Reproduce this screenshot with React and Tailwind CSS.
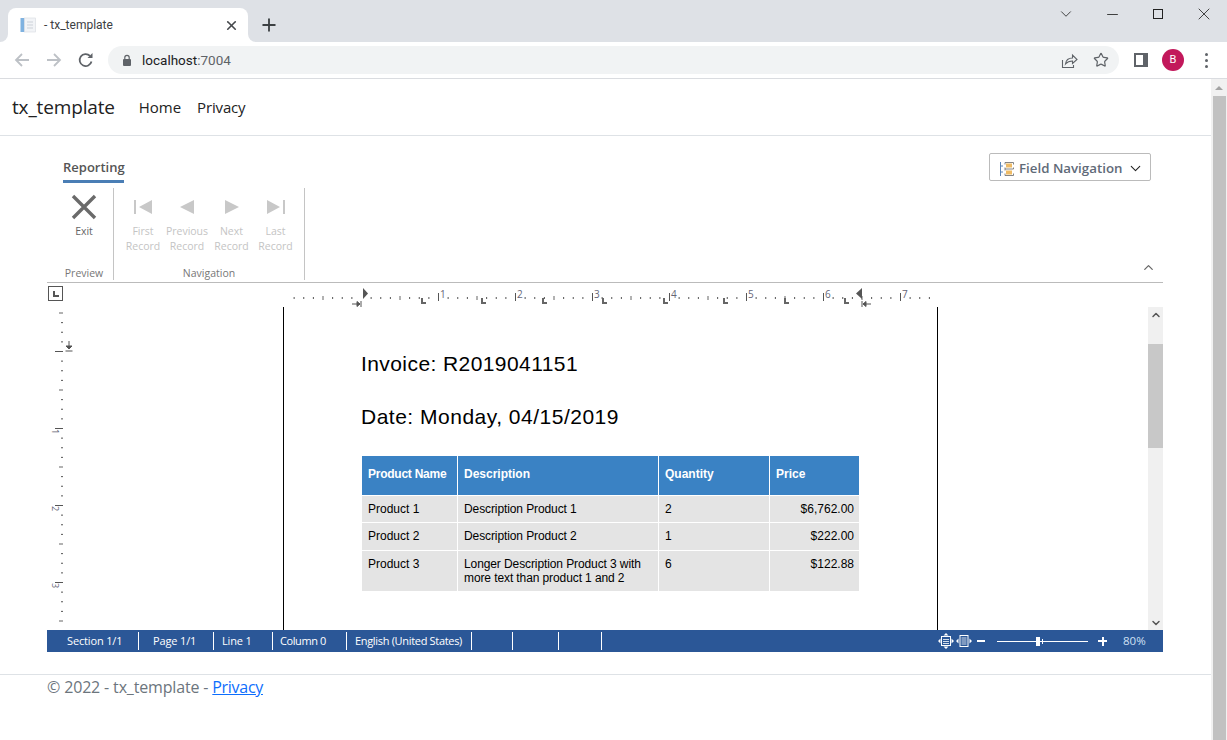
import React from 'react';
import { ChevronDown, ChevronUp, Minus, X, Star, Plus } from 'lucide-react';

const ui = { fontFamily: '"Open Sans", "Noto Sans", sans-serif' };

const INCH = 77;
const ZERO_X = 297; // inch 0 in top ruler svg coords (starts at page x=64)

function Favicon() {
    return (
        <svg width="16" height="16" viewBox="0 0 16 16">
            <rect x="0.5" y="1" width="4" height="14" fill="#7fb2e0" />
            <rect x="4.5" y="1" width="11" height="14" fill="#f2f4f7" stroke="#d5d9df" strokeWidth="0.6" />
            <path d="M7 5h6M7 8h6M7 11h6" stroke="#ccd1d8" strokeWidth="1" />
        </svg>
    );
}

function ChromeBar() {
    return (
        <div className="shrink-0" style={ui}>
            <div className="h-[42px] bg-[#dee1e6] flex items-end pl-2 relative">
                <div className="w-[240px] h-[34px] bg-white rounded-t-lg flex items-center pl-[12px] pr-[9px] relative">
                    <div className="absolute left-[-8px] bottom-0 w-[8px] h-[8px] bg-white">
                        <div className="w-full h-full bg-[#dee1e6] rounded-br-lg" />
                    </div>
                    <div className="absolute right-[-8px] bottom-0 w-[8px] h-[8px] bg-white">
                        <div className="w-full h-full bg-[#dee1e6] rounded-bl-lg" />
                    </div>
                    <Favicon />
                    <span className="ml-[8px] text-[12px] text-[#3c4043] flex-1" style={{ fontFamily: 'Roboto, sans-serif' }}>- tx_template</span>
                    <X size={15} strokeWidth={2.6} className="text-[#45484c]" />
                </div>
                <Plus size={20} strokeWidth={2.2} className="ml-[11px] mb-[7px] text-[#3c4043]" />
                <div className="ml-auto flex items-start h-full self-start text-[#222]">
                    <div className="w-[46px] h-[28px] flex items-center justify-center"><ChevronDown size={18} strokeWidth={1.1} /></div>
                    <div className="w-[46px] h-[28px] flex items-center justify-center"><Minus size={17} strokeWidth={1.2} /></div>
                    <div className="w-[46px] h-[28px] flex items-center justify-center"><div className="w-[10px] h-[10px] border border-[#222]" /></div>
                    <div className="w-[46px] h-[28px] flex items-center justify-center"><X size={20} strokeWidth={1} /></div>
                </div>
            </div>
            <div className="h-[37px] bg-white border-b border-[#dadce0] flex items-center pl-[13px]">
                <svg width="18" height="18" viewBox="0 0 18 18" fill="none" stroke="#bdc1c6" strokeWidth="1.8"><path d="M16 9H3M9 3 3 9l6 6" /></svg>
                <svg width="18" height="18" viewBox="0 0 18 18" fill="none" stroke="#bdc1c6" strokeWidth="1.8" className="ml-[14px]"><path d="M2 9h13M9 3l6 6-6 6" /></svg>
                <svg width="18" height="18" viewBox="0 0 18 18" fill="none" className="ml-[14px]">
                    <path d="M14.5 10.5a6 6 0 1 1-1.5-5.6" stroke="#5f6368" strokeWidth="1.8" />
                    <path d="M15.5 2v5h-5z" fill="#5f6368" />
                </svg>
                <div className="ml-[13px] w-[1011px] h-[28px] bg-[#f1f3f4] rounded-full flex items-center pl-[13px] pr-[10px]">
                    <svg width="12" height="13" viewBox="0 0 12 13" fill="#5f6368">
                        <rect x="2" y="5" width="8" height="7" rx="1" />
                        <path d="M3.8 5V3.6a2.2 2.2 0 0 1 4.4 0V5" fill="none" stroke="#5f6368" strokeWidth="1.2" />
                    </svg>
                    <span className="ml-[9px] text-[13.5px] text-[#202124]" style={{ fontFamily: 'Roboto, sans-serif' }}>localhost<span className="text-[#5f6368]">:7004</span></span>
                    <svg width="17" height="17" viewBox="0 0 17 17" fill="none" stroke="#5f6368" strokeWidth="1.1" className="ml-auto">
                        <path d="M1.5 8v7.5h11V13" />
                        <path d="M4.5 12c.5-4 3-6 7-6V3l4.5 4.5L11.5 11.5V9c-3 0-5 .7-7 3z" />
                    </svg>
                    <Star size={16} strokeWidth={1.8} className="ml-[15px] text-[#5f6368]" />
                </div>
                <div className="ml-[15px] w-[14px] h-[14px] bg-white border-2 border-r-[5px] border-[#5f6368]" />
                <div className="ml-[14px] w-[22px] h-[22px] rounded-full bg-[#c2185b] text-white text-[11px] flex items-center justify-center" style={{ fontFamily: 'Roboto, sans-serif' }}>B</div>
                <div className="ml-[21px] flex flex-col gap-[3px]">
                    <div className="w-[3px] h-[3px] rounded-full bg-[#5f6368]" />
                    <div className="w-[3px] h-[3px] rounded-full bg-[#5f6368]" />
                    <div className="w-[3px] h-[3px] rounded-full bg-[#5f6368]" />
                </div>
            </div>
        </div>
    );
}

function NavIcon({ type }) {
    const fill = '#c8c8c8';
    return (
        <svg width="20" height="16" viewBox="0 0 20 16">
            {type === 'first' && <path d="M1 1h2v14H1zM19 1v14L6 8z" fill={fill} />}
            {type === 'prev' && <path d="M17 1v14L3 8z" fill={fill} />}
            {type === 'next' && <path d="M3 1v14l14-7z" fill={fill} />}
            {type === 'last' && <path d="M17 1h2v14h-2zM1 1v14l13-7z" fill={fill} />}
        </svg>
    );
}

function RibbonBtn({ type, a, b, w }) {
    return (
        <div className={`flex flex-col items-center ${w}`}>
            <div className="h-[16px] flex items-center mt-[11px]"><NavIcon type={type} /></div>
            <div className="mt-[9px] text-[10.5px] leading-[15px] text-[#c4c4c4] text-center">{a}<br />{b}</div>
        </div>
    );
}

function Ribbon() {
    return (
        <div className="h-[147px] border-b border-[#bbb] relative shrink-0" style={ui}>
            <div className="pl-4 pt-[17px]">
                <div className="w-[61px] text-[13px] font-semibold text-[#555] text-center border-b-[3px] border-[#4a7eb5] h-[30px] leading-[29px]">Reporting</div>
            </div>
            <div className="flex h-[92px] mt-[5px]">
                <div className="w-[67px] pl-[8px] border-r border-[#c4c4c4] flex flex-col items-center">
                    <svg width="26" height="26" viewBox="0 0 26 26" className="mt-[6px]"><path d="M2 2 24 24M24 2 2 24" stroke="#6a6a6a" strokeWidth="3.4" /></svg>
                    <div className="mt-[4px] text-[10.5px] leading-[15px] text-[#666]">Exit</div>
                    <div className="mt-auto pt-[2px] text-[10.5px] leading-[15px] text-[#777] translate-y-[1px]">Preview</div>
                </div>
                <div className="w-[191px] border-r border-[#c4c4c4] flex flex-col items-center">
                    <div className="flex pl-[7px] w-full">
                        <RibbonBtn type="first" a="First" b="Record" w="w-[44px]" />
                        <RibbonBtn type="prev" a="Previous" b="Record" w="w-[44px]" />
                        <RibbonBtn type="next" a="Next" b="Record" w="w-[45px]" />
                        <RibbonBtn type="last" a="Last" b="Record" w="w-[43px]" />
                    </div>
                    <div className="mt-auto text-[10.5px] leading-[15px] text-[#777] translate-y-[1px]">Navigation</div>
                </div>
            </div>
            <div className="absolute right-[12px] top-[17px] w-[162px] h-[28px] border border-[#bbb] rounded-[2px] flex items-center pl-[9px] pt-[3px] bg-white">
                <svg width="16" height="16" viewBox="0 0 16 16" fill="none">
                    <path d="M1.5 1v14M1.5 5H4M1.5 11H4" stroke="#5b85b8" />
                    <path d="M6 3.5V1.5h8.500v2M6 6.5v1.500h8.500V6.500M6 9.500V8M6 12.500v2h8.500v-2" stroke="#666" strokeWidth="0.8" />
                    <rect x="7" y="2.500" width="6" height="4" fill="#eebb66" />
                    <rect x="7" y="9.500" width="6" height="4" fill="#eebb66" />
                </svg>
                <span className="ml-[4px] text-[13.3px] font-semibold text-[#5f6a78]">Field Navigation</span>
                <ChevronDown size={17} strokeWidth={1.5} className="ml-[5px] text-[#222]" />
            </div>
            <ChevronUp size={15} strokeWidth={2} className="absolute right-[7px] bottom-[7px] text-[#666]" />
        </div>
    );
}

function TopRuler() {
    const ticks = [];
    for (let i = -7; i <= 59; i++) {
        const x = ZERO_X + (i * INCH) / 8;
        if (i % 8 === 0) {
            if (i > 0) ticks.push(<rect key={i} x={x} y="10" width="1" height="8" fill="#555" />);
        } else if (i % 4 === 0) {
            ticks.push(<rect key={i} x={x} y="13" width="1" height="4" fill="#666" />);
        } else {
            ticks.push(<rect key={i} x={x} y="14" width="1" height="2" fill="#555" />);
        }
    }
    const tabs = [];
    for (let i = 1; i <= 8; i++) {
        const x = Math.round(ZERO_X + i * 60.5) - 1;
        tabs.push(<path key={i} d={`M${x} 15h2v4h3v2h-5z`} fill="#666" />);
    }
    return (
        <svg width="1099" height="24" className="block">
            {ticks}
            {tabs}
            {[1, 2, 3, 4, 5, 6, 7].map(n => (
                <text key={n} x={ZERO_X + n * INCH + 2} y="15" fontSize="10" fill="#667" fontFamily="Open Sans, sans-serif">{n}</text>
            ))}
            <path d="M299 5v11l5-5.500z" fill="#555" />
            <path d="M288 21h8M293 18.500l3 2.500-3 2.500zM297 18v6" fill="#555" stroke="#555" strokeWidth="1" />
            <path d="M798 5v11l-6-5.500z" fill="#555" />
            <path d="M807 21h-8M802 18.500l-3 2.500 3 2.500zM798 18v6" fill="#555" stroke="#555" strokeWidth="1" />
        </svg>
    );
}

function SideRuler() {
    const ticks = [];
    for (let i = -4; i <= 28; i++) {
        const y = 44 + (i * INCH) / 8;
        if (i % 8 === 0) ticks.push(<rect key={i} x="8" y={y} width="8" height="1" fill="#555" />);
        else if (i % 4 === 0) ticks.push(<rect key={i} x="12" y={y} width="4" height="1" fill="#666" />);
        else ticks.push(<rect key={i} x="14" y={y} width="2" height="1" fill="#555" />);
    }
    return (
        <svg width="36" height="323" className="block shrink-0">
            {ticks}
            {[1, 2, 3].map(n => (
                <text key={n} x="0" y="0" fontSize="9" fill="#667" fontFamily="Open Sans, sans-serif" transform={`translate(5 ${44 + n * INCH + 1}) rotate(90)`}>{n}</text>
            ))}
            <path d="M22 34v8M19 39l3 3 3-3zM18.500 44h7" stroke="#555" fill="#555" strokeWidth="1" />
        </svg>
    );
}

const rows = [
    ['Product 1', 'Description Product 1', '2', '$6,762.00', 'h-[27px]'],
    ['Product 2', 'Description Product 2', '1', '$222.00', 'h-[28px]'],
    ['Product 3', <>Longer Description Product 3 with<br />more text than product 1 and 2</>, '6', '$122.88', 'h-[41px]'],
];

function InvoiceTable() {
    return (
        <table className="mt-[27px] ml-[1px] w-[497px] table-fixed border-collapse text-[12px]">
            <colgroup>
                <col className="w-[95.5px]" />
                <col className="w-[201px]" />
                <col className="w-[111px]" />
                <col className="w-[89.5px]" />
            </colgroup>
            <thead>
                <tr className="h-[39px] bg-[#3a82c4] text-white font-bold text-left">
                    <th className="border-r border-white pl-[6px] pb-[2px] tracking-[-0.25px]">Product Name</th>
                    <th className="border-r border-white pl-[6px] pb-[2px]">Description</th>
                    <th className="border-r border-white pl-[6px] pb-[2px]">Quantity</th>
                    <th className="pl-[6px] pb-[2px]">Price</th>
                </tr>
            </thead>
            <tbody>
                {rows.map(r => (
                    <tr key={r[0]} className={`${r[4]} bg-[#e4e4e4] text-black border-t border-white align-top`}>
                        <td className="border-r border-white pl-[6px] pt-[6px] leading-[14px]">{r[0]}</td>
                        <td className="border-r border-white pl-[6px] pt-[6px] leading-[14px] tracking-[-0.1px]">{r[1]}</td>
                        <td className="border-r border-white pl-[6px] pt-[6px] leading-[14px]">{r[2]}</td>
                        <td className="pr-[5px] pt-[6px] leading-[14px] text-right">{r[3]}</td>
                    </tr>
                ))}
            </tbody>
        </table>
    );
}

function StatusBar() {
    const cells = [
        ['w-[92px] pl-[20px] tracking-[-0.15px]', 'Section 1/1'],
        ['w-[75px] pl-[14px] tracking-[-0.15px]', 'Page 1/1'],
        ['w-[59px] pl-[8px] tracking-[-0.15px]', 'Line 1'],
        ['w-[74px] pl-[7px] tracking-[-0.4px]', 'Column 0'],
        ['w-[125px] pl-[8px] tracking-[-0.32px]', 'English (United States)'],
        ['w-[41px]', ''],
        ['w-[46px]', ''],
        ['w-[43px]', ''],
    ];
    return (
        <div className="h-[22px] bg-[#2b5797] text-white flex items-center text-[11px] shrink-0" style={ui}>
            {cells.map(([w, t], i) => (
                <div key={i} className={`${w} h-[18px] leading-[18px] border-r border-white whitespace-nowrap`}>{t}</div>
            ))}
            <svg width="16" height="16" viewBox="0 0 16 16" className="ml-[336px]" fill="white">
                <path d="M8 0l2.500 2.500h-5zM8 16l-2.500-2.500h5zM0 8l2.500-2.500v5zM16 8l-2.500 2.500v-5z" />
                <rect x="3.500" y="3.500" width="9" height="9" fill="none" stroke="white" />
                <path d="M5 6.500h6M5 8.500h6M5 10.500h6" stroke="white" strokeWidth="0.8" />
            </svg>
            <svg width="16" height="16" viewBox="0 0 16 16" className="ml-[2px]" fill="white">
                <path d="M0 8l2.500-2.500v5zM16 8l-2.500 2.500v-5z" />
                <rect x="4" y="2.500" width="8" height="11" fill="none" stroke="white" />
                <path d="M5.500 5h5M5.500 7h5M5.500 9h5M5.500 11h5" stroke="white" strokeWidth="0.8" />
            </svg>
            <div className="ml-[5px] w-[8px] h-[2px] bg-white" />
            <div className="ml-[12px] w-[91px] h-[1px] bg-white relative">
                <div className="absolute left-[39px] top-[-4px] w-[4px] h-[9px] bg-white" />
                <div className="absolute left-[45px] top-[-2px] w-[1px] h-[5px] bg-white" />
            </div>
            <div className="ml-[10px] w-[9px] h-[2px] bg-white relative">
                <div className="absolute left-[3.500px] top-[-3.500px] w-[2px] h-[9px] bg-white" />
            </div>
            <span className="ml-[16px] text-[11.5px] text-[#cfe0f5]">80%</span>
        </div>
    );
}

function DocScrollbar() {
    return (
        <div className="w-[15px] bg-[#f0f0f0] flex flex-col shrink-0">
            <div className="h-[15px] flex items-center justify-center"><ChevronUp size={12} strokeWidth={3} className="text-[#555]" /></div>
            <div className="h-[22px]" />
            <div className="h-[104px] bg-[#c8c8c8]" />
            <div className="flex-1" />
            <div className="h-[15px] flex items-center justify-center"><ChevronDown size={12} strokeWidth={3} className="text-[#555]" /></div>
        </div>
    );
}

export default function App() {
    return (
        <div className="h-[740px] overflow-hidden flex flex-col bg-white">
            <ChromeBar />
            <div className="flex flex-1 min-h-0">
                <div className="w-[1211px] flex flex-col">
                    <div className="h-[56px] border-b border-[#dee2e6] box-content flex items-center pl-[12px] shrink-0" style={ui}>
                        <span className="text-[19px] text-[#222] tracking-[-0.15px]">tx_template</span>
                        <span className="ml-[24px] text-[15px] text-[#222] tracking-[-0.05px]">Home</span>
                        <span className="ml-[16px] text-[15px] text-[#222] tracking-[-0.15px]">Privacy</span>
                    </div>
                    <div className="mx-[47px] w-[1116px]">
                        <Ribbon />
                        <div className="h-[24px] flex shrink-0">
                            <div className="w-[15px] h-[15px] mt-[3px] ml-[1px] border border-[#555] flex items-center justify-center">
                                <div className="w-[6px] h-[6px] border-l-2 border-b-2 border-[#555]" />
                            </div>
                            <div className="ml-[1px]"><TopRuler /></div>
                        </div>
                        <div className="h-[323px] flex">
                            <SideRuler />
                            <div className="w-[200px] shrink-0" />
                            <div className="w-[655px] shrink-0 border-x border-black pl-[77px] overflow-hidden" style={{ fontFamily: '"Liberation Sans", sans-serif' }}>
                                <div className="mt-[45px] text-[21px] leading-[24px] text-black tracking-[0.42px]">Invoice: R2019041151</div>
                                <div className="mt-[29px] text-[21px] leading-[24px] text-black tracking-[0.5px]">Date: Monday, 04/15/2019</div>
                                <InvoiceTable />
                            </div>
                            <div className="flex-1" />
                            <DocScrollbar />
                        </div>
                        <StatusBar />
                    </div>
                    <div className="mt-[22px] border-t border-[#dee2e6] pl-[47px] text-[16px] text-[#6c757d] leading-[24px] tracking-[-0.16px]" style={ui}>
                        © 2022 - tx_template - <span className="text-[#0d6efd] underline tracking-[-0.3px]">Privacy</span>
                    </div>
                </div>
                <div className="w-[16px] bg-[#f1f1f1] flex flex-col items-center">
                    <div className="h-[17px] flex items-center justify-center">
                        <div className="w-0 h-0 border-x-[4px] border-x-transparent border-b-[4px] border-b-[#a3a3a3]" />
                    </div>
                    <div className="flex-1 w-[13px] bg-[#c1c1c1]" />
                </div>
            </div>
        </div>
    );
}
